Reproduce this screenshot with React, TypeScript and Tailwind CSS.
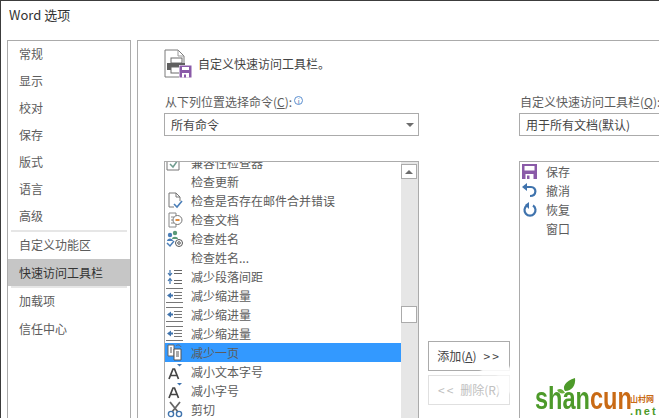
const font = "font-['Noto_Sans_CJK_SC','Liberation_Sans',sans-serif]";

const FloppyIcon = () => (
	<svg width="15" height="15" viewBox="0 0 15 15">
		<rect width="15" height="15" fill="#8a5aa8" />
		<rect x="2.5" y="2" width="10" height="4.5" fill="#fff" />
		<rect x="3.5" y="10" width="8" height="5" fill="#fff" />
		<rect x="5" y="11.5" width="2.5" height="3.5" fill="#8a5aa8" />
	</svg>
);

const PrinterIcon = () => (
	<svg width="28" height="30" viewBox="0 0 28 30">
		<path d="M1 1H14L20 7V28H1Z" fill="#fff" stroke="#7a7a7a" />
		<path d="M14 1V7H20" fill="none" stroke="#9a9a9a" />
		<rect x="7" y="9" width="11" height="5" fill="#fff" stroke="#6a6a6a" />
		<rect x="3" y="14" width="18" height="7" fill="#5f5f5f" />
		<rect x="7" y="18" width="11" height="6" fill="#fff" stroke="#6a6a6a" />
		<g transform="translate(15 16)">
			<rect width="13" height="13" fill="#fff" />
			<rect x="0.5" y="0.5" width="12" height="12" fill="#8a5aa8" />
			<rect x="3" y="2" width="7" height="3" fill="#fff" />
			<rect x="3" y="8" width="7" height="4.5" fill="#fff" />
			<rect x="5" y="9.5" width="2" height="3" fill="#8a5aa8" />
		</g>
	</svg>
);

const CheckBoxIcon = () => (
	<svg width="16" height="16" viewBox="0 0 16 16">
		<path d="M1 1H13V14H1Z" fill="none" stroke="#777" />
		<path d="M4 8L7 11L12 4" fill="none" stroke="#6f9c8f" strokeWidth="1.5" />
	</svg>
);

const DocCheckIcon = () => (
	<svg width="16" height="17" viewBox="0 0 16 17">
		<path d="M2 1H9L13 5V9M2 1V15H7M9 1V5H13" fill="none" stroke="#777" />
		<path d="M7 12L10 15L15 9" fill="none" stroke="#4a7eb8" strokeWidth="1.6" />
	</svg>
);

const InspectIcon = () => (
	<svg width="16" height="16" viewBox="0 0 16 16">
		<path d="M2 1H9V15H2Z" fill="#fff" stroke="#888" />
		<path d="M4 5H7M4 8H6M4 11H7" stroke="#888" />
		<circle cx="10.5" cy="8" r="4.5" fill="#fff" stroke="#777" />
		<rect x="8.5" y="7" width="4" height="2" fill="#e08a3c" />
	</svg>
);

const NamesIcon = () => (
	<svg width="18" height="18" viewBox="0 0 18 18">
		<circle cx="9" cy="3" r="2.2" fill="#5a9a78" />
		<path d="M6 9C6 6 12 6 12 9Z" fill="#5a9a78" />
		<circle cx="4" cy="5" r="2.2" fill="#4a7eb8" />
		<path d="M1 11C1 7.5 7 7.5 7 11Z" fill="#4a7eb8" />
		<path d="M1 13L4 16L8 11" fill="none" stroke="#4a7eb8" strokeWidth="1.5" />
		<circle cx="13" cy="13" r="3.5" fill="none" stroke="#555" />
		<circle cx="13" cy="13" r="1.3" fill="none" stroke="#555" />
	</svg>
);

const SpacingIcon = () => (
	<svg width="16" height="16" viewBox="0 0 16 16">
		<path d="M3 1V6M1 4L3 6.5L5 4" fill="none" stroke="#3f73ad" strokeWidth="1.2" />
		<path d="M3 15V10M1 12L3 9.5L5 12" fill="none" stroke="#3f73ad" strokeWidth="1.2" />
		<path d="M7 1.5H15M7 4.5H15M7 11.5H15M7 14.5H15" stroke="#666" />
	</svg>
);

const OutdentIcon = () => (
	<svg width="17" height="15" viewBox="0 0 17 15">
		<path d="M0 0.5H17M0 14.5H17" stroke="#777" />
		<path d="M8 4.5H16M8 7.5H16M8 10.5H16" stroke="#777" />
		<path d="M1 7.5L5 4.5V6.5H7V8.5H5V10.5Z" fill="#3f73ad" />
	</svg>
);

const PageIcon = () => (
	<svg width="16" height="17" viewBox="0 0 16 17">
		<path d="M1 1H7V12H1Z" fill="#fff" stroke="#666" />
		<path d="M7 5H14V16H7Z" fill="#fff" stroke="#555" />
		<path d="M3 4H5M3 6H5M3 8H5M9 8H12M9 10H12M9 12H12" stroke="#555" />
		<path d="M9 2C11 0 13 1 14 3" fill="none" stroke="#666" />
	</svg>
);

const ShrinkIcon = () => (
	<svg width="16" height="17" viewBox="0 0 16 17">
		<path d="M2 16L6 6H7.5L11.5 16M3.8 12.5H9.7" fill="none" stroke="#444" strokeWidth="1.7" />
		<path d="M10 1H15L12.5 3.5Z" fill="#3f73ad" />
	</svg>
);

const ScissorsIcon = () => (
	<svg width="16" height="17" viewBox="0 0 16 17">
		<path d="M3 1L11 11M13 1L5 11" stroke="#666" strokeWidth="1.8" />
		<circle cx="4" cy="13" r="2.6" fill="none" stroke="#3f73ad" strokeWidth="1.4" />
		<circle cx="12" cy="13" r="2.6" fill="none" stroke="#3f73ad" strokeWidth="1.4" />
	</svg>
);

const UndoIcon = () => (
	<svg width="15" height="15" viewBox="0 0 15 15">
		<path d="M3 4H9C15 4 15 13 8 13" fill="none" stroke="#3f73ad" strokeWidth="2.2" />
		<path d="M0 4L5 0V8Z" fill="#3f73ad" />
	</svg>
);

const RedoIcon = () => (
	<svg width="15" height="15" viewBox="0 0 15 15">
		<path d="M5 3.5A5.5 5.5 0 1 0 11 3.5" fill="none" stroke="#3f73ad" strokeWidth="2.2" />
		<path d="M7 0V7L3 3Z" fill="#3f73ad" />
	</svg>
);

const menuTop = ["常规", "显示", "校对", "保存", "版式", "语言", "高级"];

const commands = [
	{ label: "检查更新" },
	{ label: "检查是否存在邮件合并错误", icon: <DocCheckIcon /> },
	{ label: "检查文档", icon: <InspectIcon /> },
	{ label: "检查姓名", icon: <NamesIcon /> },
	{ label: "检查姓名..." },
	{ label: "减少段落间距", icon: <SpacingIcon /> },
	{ label: "减少缩进量", icon: <OutdentIcon /> },
	{ label: "减少缩进量", icon: <OutdentIcon /> },
	{ label: "减少缩进量", icon: <OutdentIcon /> },
	{ label: "减少一页", icon: <PageIcon />, selected: true },
	{ label: "减小文本字号", icon: <ShrinkIcon /> },
	{ label: "减小字号", icon: <ShrinkIcon /> },
	{ label: "剪切", icon: <ScissorsIcon /> },
];

const toolbar = [
	{ label: "保存", icon: <FloppyIcon /> },
	{ label: "撤消", icon: <UndoIcon /> },
	{ label: "恢复", icon: <RedoIcon /> },
	{ label: "窗口" },
];

const Caret = () => <div className="w-0 h-0 border-x-[4px] border-x-transparent border-t-[4px] border-t-[#6d6d6d]"></div>;

const Watermark = () => (
	<>
		<div className="absolute left-[480px] top-[366px] w-[32px] h-[8px] bg-white opacity-90 blur-[1px]"></div>
		<div className="absolute left-[496px] top-[374px] w-[16px] h-[18px] bg-white opacity-70 blur-[1px]"></div>
		<div className="absolute left-[526px] top-[378px] w-[133px] h-[40px]">
			<svg className="absolute left-[30px] top-[-1px]" width="22" height="18" viewBox="0 0 22 18">
				<path d="M8 13C5 9 8 3 18 0C19 7 15 13 8 13Z" fill="#4d9a2a" />
				<path d="M0 12C3 10 6 11 8 15C4 16 2 15 0 12Z" fill="#6aae3c" />
			</svg>
			<p className="absolute left-[8px] top-[2px] origin-left scale-x-[0.76] font-['Liberation_Sans',sans-serif] font-bold text-[31px] leading-[36px] whitespace-nowrap">
				<span className="text-[#4d9a2a]">shan</span>
				<span className="text-[#c96a14]">cun</span>
			</p>
			<p className={`absolute left-[103px] top-[14px] text-[8px] leading-[12px] font-bold text-[#c96a14] ${font}`}>山村网</p>
			<p className="absolute left-[103px] top-[25px] font-['Liberation_Sans',sans-serif] font-bold text-[11px] leading-[14px] tracking-[2px] text-[#4d9a2a]">.net</p>
		</div>
	</>
);

const App = () => {
	return (
		<div className={`relative w-[659px] h-[418px] overflow-hidden bg-white border-t border-l border-[#3c3c3c] text-[12px] text-[#5c5c5c] ${font}`}>
			<h1 className="h-[39px] pl-2 pt-[4px] text-[13px] leading-[20px] text-[#333]">Word 选项</h1>

			<div className="flex gap-[6px] pl-[6px]">
				<nav className="w-[124px] h-[400px] shrink-0 border border-[#ababab]">
					{menuTop.map((item) => (
						<p key={item} className="h-[27px] pl-[11px] leading-[26px]">{item}</p>
					))}
					<div className="mx-[3px] h-[2px] bg-[#e6e6e6]"></div>
					<p className="h-[27px] pl-[11px] leading-[26px]">自定义功能区</p>
					<p className="h-[27px] pl-[11px] leading-[27px] bg-[#c6c6c6] text-[#333]">快速访问工具栏</p>
					<div className="mx-[3px] h-[2px] bg-[#e6e6e6]"></div>
					<p className="h-[27px] pl-[11px] leading-[26px]">加载项</p>
					<p className="h-[27px] pl-[11px] pt-[1px] leading-[26px]">信任中心</p>
				</nav>

				<main className="w-[600px] h-[400px] shrink-0 border-t border-l border-[#ababab] pl-[26px] pt-[8px]">
					<div className="flex items-center gap-[6px] h-[30px]">
						<PrinterIcon />
						<p className="leading-[28px] text-[#444]">自定义快速访问工具栏。</p>
					</div>

					<div className="flex mt-[15px]">
						<div className="w-[255px] shrink-0">
							<div className="flex items-center h-[16px] pl-[1px] gap-[2px]">
								<span>从下列位置选择命令(<span className="underline">C</span>):</span>
								<span className="w-[9px] h-[9px] mb-[3px] rounded-full border border-[#5b8fd0] text-[7px] leading-[8px] text-center text-[#3f73ad]">i</span>
							</div>
							<div className="flex items-center justify-between h-[23px] mt-[3px] border border-[#ababab] pl-[6px] pr-[4px] text-[#444]">
								<span>所有命令</span>
								<Caret />
							</div>

							<div className="flex h-[260px] mt-[25px] border border-[#ababab] overflow-hidden">
								<div className="flex-1 overflow-hidden">
									<div className="flex h-[10px] overflow-hidden">
										<div className="flex items-end w-[26px] pl-[1px] shrink-0">
											<CheckBoxIcon />
										</div>
										<p className="leading-[10px] -translate-y-[4px]">兼容性检查器</p>
									</div>
									{commands.map((c, i) => (
										<div key={i} className={`flex items-center h-[19px] ${c.selected ? "bg-[#3399ff]" : ""}`}>
											<div className="flex items-center justify-center w-[19px] mr-[7px] shrink-0">{c.icon}</div>
											<p className="leading-[19px] whitespace-nowrap">{c.label}</p>
										</div>
									))}
								</div>
								<div className="w-[17px] shrink-0 bg-[#e6e6e6] pt-[2px] pr-[1px]">
									<div className="flex items-center justify-center h-[15px] bg-white border border-[#ababab]">
										<div className="w-0 h-0 border-x-[4px] border-x-transparent border-b-[4px] border-b-[#6d6d6d]"></div>
									</div>
									<div className="h-[17px] mt-[127px] bg-white border border-[#ababab]"></div>
								</div>
							</div>
						</div>

						<div className="w-[100px] shrink-0 pl-[9px] pt-[247px]">
							<div className="flex items-center justify-center gap-[7px] w-[82px] h-[30px] border border-[#ababab] text-[#444]">
								<span>添加(<span className="underline">A</span>)</span>
								<span className="tracking-[2px]">&gt;&gt;</span>
							</div>
							<div className="flex items-center justify-center gap-[5px] w-[82px] h-[30px] mt-[4px] border border-[#e0e0e0] text-[#c0c0c0]">
								<span className="tracking-[2px]">&lt;&lt;</span>
								<span>删除(R)</span>
							</div>
						</div>

						<div className="w-[240px] shrink-0">
							<div className="h-[16px] pl-[1px] leading-[16px]">自定义快速访问工具栏(<span className="underline">Q</span>):</div>
							<div className="flex items-center h-[23px] mt-[3px] border border-[#ababab] pl-[6px] text-[#444]">用于所有文档(默认)</div>
							<div className="h-[260px] mt-[25px] border border-[#ababab]">
								{toolbar.map((t) => (
									<div key={t.label} className="flex items-center h-[19px]">
										<div className="flex items-center justify-center w-[17px] ml-[1px] mr-[8px] shrink-0">{t.icon}</div>
										<p className="leading-[19px]">{t.label}</p>
									</div>
								))}
							</div>
						</div>
					</div>
				</main>
			</div>

			<Watermark />
		</div>
	);
};

export default App;
